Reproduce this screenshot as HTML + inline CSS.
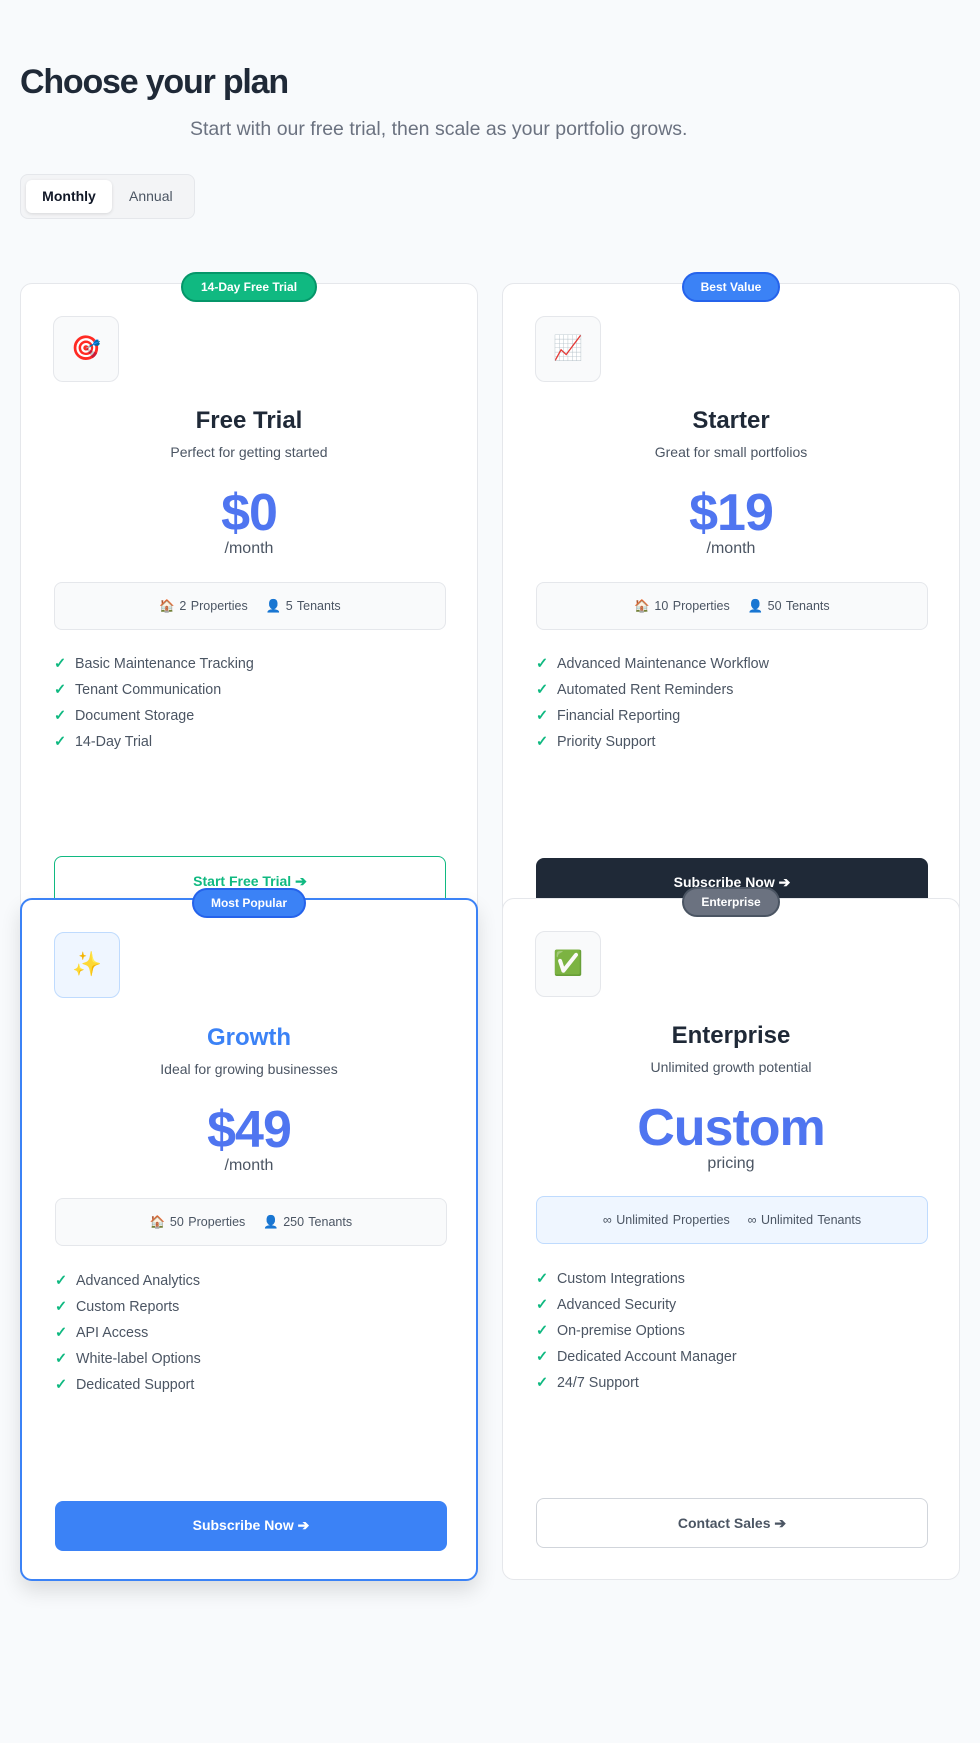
<!DOCTYPE html>
<html><head><meta charset="utf-8"><style>
*{box-sizing:border-box;margin:0;padding:0}
body{width:980px;height:1743px;background:#f8fafc;font-family:"Liberation Sans",sans-serif;position:relative;overflow:hidden;color:#1f2937}
.a{position:absolute}
h1{position:absolute;left:20px;top:63px;font-size:34px;font-weight:700;letter-spacing:-1.2px;color:#1f2937}
.sub{left:190px;top:118px;font-size:19.5px;color:#6b7280}
.tog{left:20px;top:174px;width:175px;height:45px;background:#f3f4f6;border:1px solid #e5e7eb;border-radius:8px}
.tog .m{position:absolute;left:5px;top:5px;width:86px;height:33px;background:#fff;border-radius:6px;box-shadow:0 1px 3px rgba(0,0,0,.12);font-size:14px;font-weight:600;text-align:center;line-height:33px;color:#111827}
.tog .y{position:absolute;left:108px;top:5px;line-height:33px;font-size:14px;color:#4b5563}
.card{position:absolute;background:#fff;border:1px solid #e5e7eb;border-radius:12px;width:458px}
.badge{position:absolute;height:30px;border-radius:15px;color:#fff;font-size:12px;font-weight:700;line-height:27px;text-align:center;border:2px solid}
.ic{position:absolute;left:32px;top:32px;width:66px;height:66px;border:1px solid #e5e7eb;background:#f9fafb;border-radius:10px;font-size:24px;text-align:center;line-height:64px}
.t{position:absolute;left:0;width:100%;text-align:center;font-size:24px;font-weight:700;color:#1f2937}
.d{position:absolute;left:0;width:100%;text-align:center;font-size:14px;color:#4b5563}
.p{position:absolute;left:0;width:100%;text-align:center;font-size:52px;font-weight:800;color:#4f75f0;letter-spacing:-1px}
.pm{position:absolute;left:0;width:100%;text-align:center;font-size:16px;color:#4b5563}
.lim{position:absolute;left:33px;width:392px;height:48px;border:1px solid #e5e7eb;background:#f9fafb;border-radius:8px;text-align:center;line-height:46px;font-size:12.5px;color:#4b5563;word-spacing:1px}
.f{position:absolute;left:33px;font-size:14.3px;color:#4b5563}
.f b{color:#10b981;font-weight:700;margin-right:9px}
.btn{position:absolute;left:33px;width:392px;height:50px;border-radius:8px;text-align:center;line-height:48px;font-size:14px;font-weight:700}
</style></head><body>
<h1>Choose your plan</h1>
<div class="a sub">Start with our free trial, then scale as your portfolio grows.</div>
<div class="a tog"><div class="m">Monthly</div><div class="y">Annual</div></div>

<div class="card" style="left:20px;top:283px;height:640px">
<div class="ic">🎯</div>
<div class="t" style="top:123px">Free Trial</div>
<div class="d" style="top:160px">Perfect for getting started</div>
<div class="p" style="top:199px">$0</div>
<div class="pm" style="top:256px">/month</div>
<div class="lim" style="top:298px">🏠 2 Properties &nbsp;&nbsp; 👤 5 Tenants</div>
<div class="f" style="top:372px"><b>✓</b>Basic Maintenance Tracking</div>
<div class="f" style="top:398px"><b>✓</b>Tenant Communication</div>
<div class="f" style="top:424px"><b>✓</b>Document Storage</div>
<div class="f" style="top:450px"><b>✓</b>14-Day Trial</div>
<div class="btn" style="top:572px;border:1px solid #10b981;color:#10b981;background:#fff">Start Free Trial ➔</div>
</div>
<div class="badge" style="left:181px;top:272px;width:136px;background:#10b981;border-color:#059669">14-Day Free Trial</div>

<div class="card" style="left:502px;top:283px;height:640px">
<div class="ic">📈</div>
<div class="t" style="top:123px">Starter</div>
<div class="d" style="top:160px">Great for small portfolios</div>
<div class="p" style="top:199px">$19</div>
<div class="pm" style="top:256px">/month</div>
<div class="lim" style="top:298px">🏠 10 Properties &nbsp;&nbsp; 👤 50 Tenants</div>
<div class="f" style="top:372px"><b>✓</b>Advanced Maintenance Workflow</div>
<div class="f" style="top:398px"><b>✓</b>Automated Rent Reminders</div>
<div class="f" style="top:424px"><b>✓</b>Financial Reporting</div>
<div class="f" style="top:450px"><b>✓</b>Priority Support</div>
<div class="btn" style="top:574px;background:#1f2937;color:#fff">Subscribe Now ➔</div>
</div>
<div class="badge" style="left:682px;top:272px;width:98px;background:#3b82f6;border-color:#2563eb">Best Value</div>

<div class="card" style="left:20px;top:898px;height:683px;border:2px solid #3b82f6;box-shadow:0 10px 20px rgba(0,0,0,.12)">
<div class="ic" style="background:#eff6ff;border-color:#bfdbfe">✨</div>
<div class="t" style="top:124px;color:#3b82f6">Growth</div>
<div class="d" style="top:161px">Ideal for growing businesses</div>
<div class="p" style="top:200px">$49</div>
<div class="pm" style="top:257px">/month</div>
<div class="lim" style="top:298px">🏠 50 Properties &nbsp;&nbsp; 👤 250 Tenants</div>
<div class="f" style="top:373px"><b>✓</b>Advanced Analytics</div>
<div class="f" style="top:399px"><b>✓</b>Custom Reports</div>
<div class="f" style="top:425px"><b>✓</b>API Access</div>
<div class="f" style="top:451px"><b>✓</b>White-label Options</div>
<div class="f" style="top:477px"><b>✓</b>Dedicated Support</div>
<div class="btn" style="top:601px;background:#3b82f6;color:#fff">Subscribe Now ➔</div>
</div>
<div class="badge" style="left:192px;top:888px;width:114px;background:#3b82f6;border-color:#2563eb">Most Popular</div>

<div class="card" style="left:502px;top:898px;height:682px">
<div class="ic">✅</div>
<div class="t" style="top:123px">Enterprise</div>
<div class="d" style="top:160px">Unlimited growth potential</div>
<div class="p" style="top:199px">Custom</div>
<div class="pm" style="top:256px">pricing</div>
<div class="lim" style="top:297px;background:#eff6ff;border-color:#bfdbfe">∞ Unlimited Properties &nbsp;&nbsp; ∞ Unlimited Tenants</div>
<div class="f" style="top:372px"><b>✓</b>Custom Integrations</div>
<div class="f" style="top:398px"><b>✓</b>Advanced Security</div>
<div class="f" style="top:424px"><b>✓</b>On-premise Options</div>
<div class="f" style="top:450px"><b>✓</b>Dedicated Account Manager</div>
<div class="f" style="top:476px"><b>✓</b>24/7 Support</div>
<div class="btn" style="top:599px;border:1px solid #d1d5db;color:#4b5563;background:#fff">Contact Sales ➔</div>
</div>
<div class="badge" style="left:682px;top:887px;width:98px;background:#6b7280;border-color:#4b5563">Enterprise</div>
</body></html>
